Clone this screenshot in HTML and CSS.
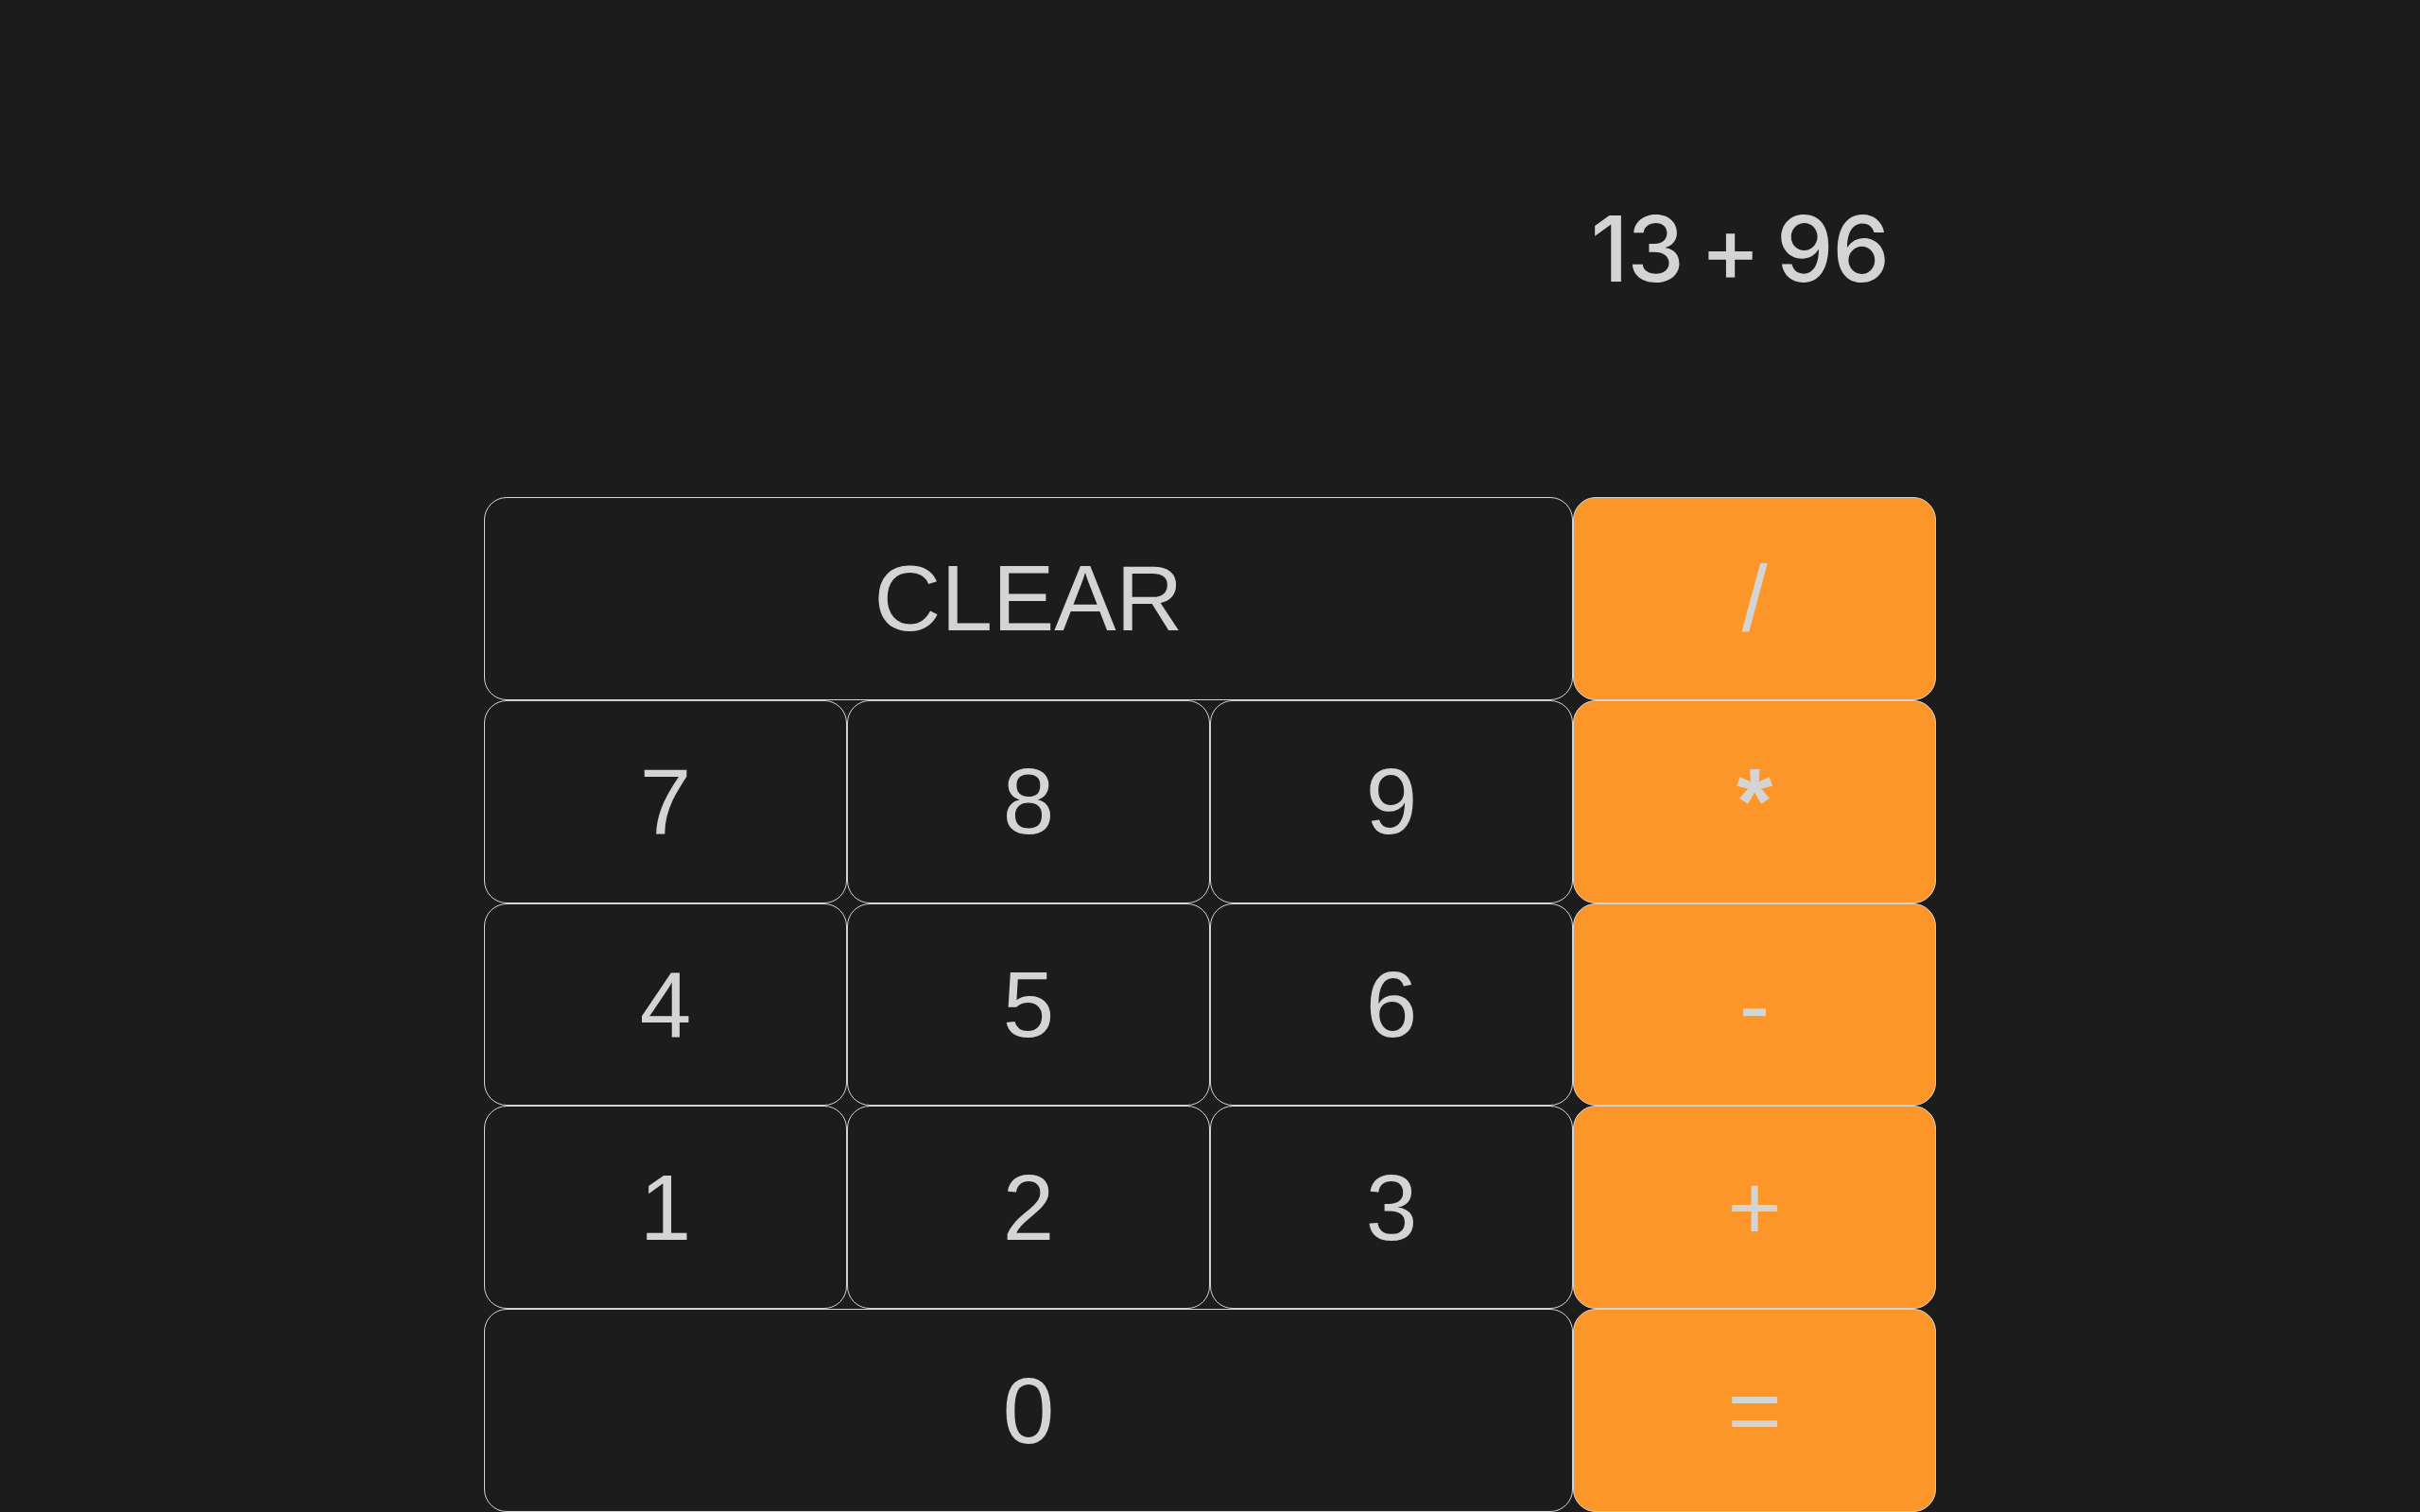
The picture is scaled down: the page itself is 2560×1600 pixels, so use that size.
FILE: index.html
```html
<!DOCTYPE html>
<html lang="en">
<head>
<meta charset="utf-8">
<title>Calculator</title>
<link rel="stylesheet" href="styles.css">
</head>
<body>
<div class="calc">
  <div class="display"><span class="expr">13 + 96</span></div>
  <div class="keypad">
    <button class="key wide">CLEAR</button>
    <button class="key op">/</button>
    <button class="key">7</button>
    <button class="key">8</button>
    <button class="key">9</button>
    <button class="key op star">*</button>
    <button class="key">4</button>
    <button class="key">5</button>
    <button class="key">6</button>
    <button class="key op">-</button>
    <button class="key">1</button>
    <button class="key">2</button>
    <button class="key">3</button>
    <button class="key op">+</button>
    <button class="key wide">0</button>
    <button class="key op">=</button>
  </div>
</div>
</body>
</html>
```
FILE: styles.css
```css
html, body {
  margin: 0;
  padding: 0;
  background: #1c1c1c;
  height: 100%;
}

.calc {
  height: 100vh;
  display: flex;
  flex-direction: column;
  align-items: center;
}

.display {
  width: 1536px;
  height: 526px;
  flex: 0 0 526px;
  box-sizing: border-box;
  display: flex;
  align-items: center;
  justify-content: flex-end;
  padding-right: 50px;
}

.expr {
  font-family: Inter, "Liberation Sans", sans-serif;
  font-size: 96px;
  font-weight: 450;
  letter-spacing: -1px;
  word-spacing: -7px;
  color: #d4d4d4;
  line-height: 1;
}

.keypad {
  width: 1536px;
  flex: 1 1 auto;
  display: grid;
  grid-template-columns: repeat(4, 1fr);
  grid-template-rows: repeat(5, 1fr);
}

.key {
  margin: 0;
  padding: 0;
  box-sizing: border-box;
  border: 1px solid #d4d4d4;
  border-radius: 24px;
  background: #1c1c1c;
  color: #d4d4d4;
  font-family: "Liberation Sans", Arial, sans-serif;
  font-size: 98px;
  line-height: 1;
}

.wide {
  grid-column: span 3;
}

.op {
  background: #fd9629;
}

.star {
  font-weight: 700;
}
```
